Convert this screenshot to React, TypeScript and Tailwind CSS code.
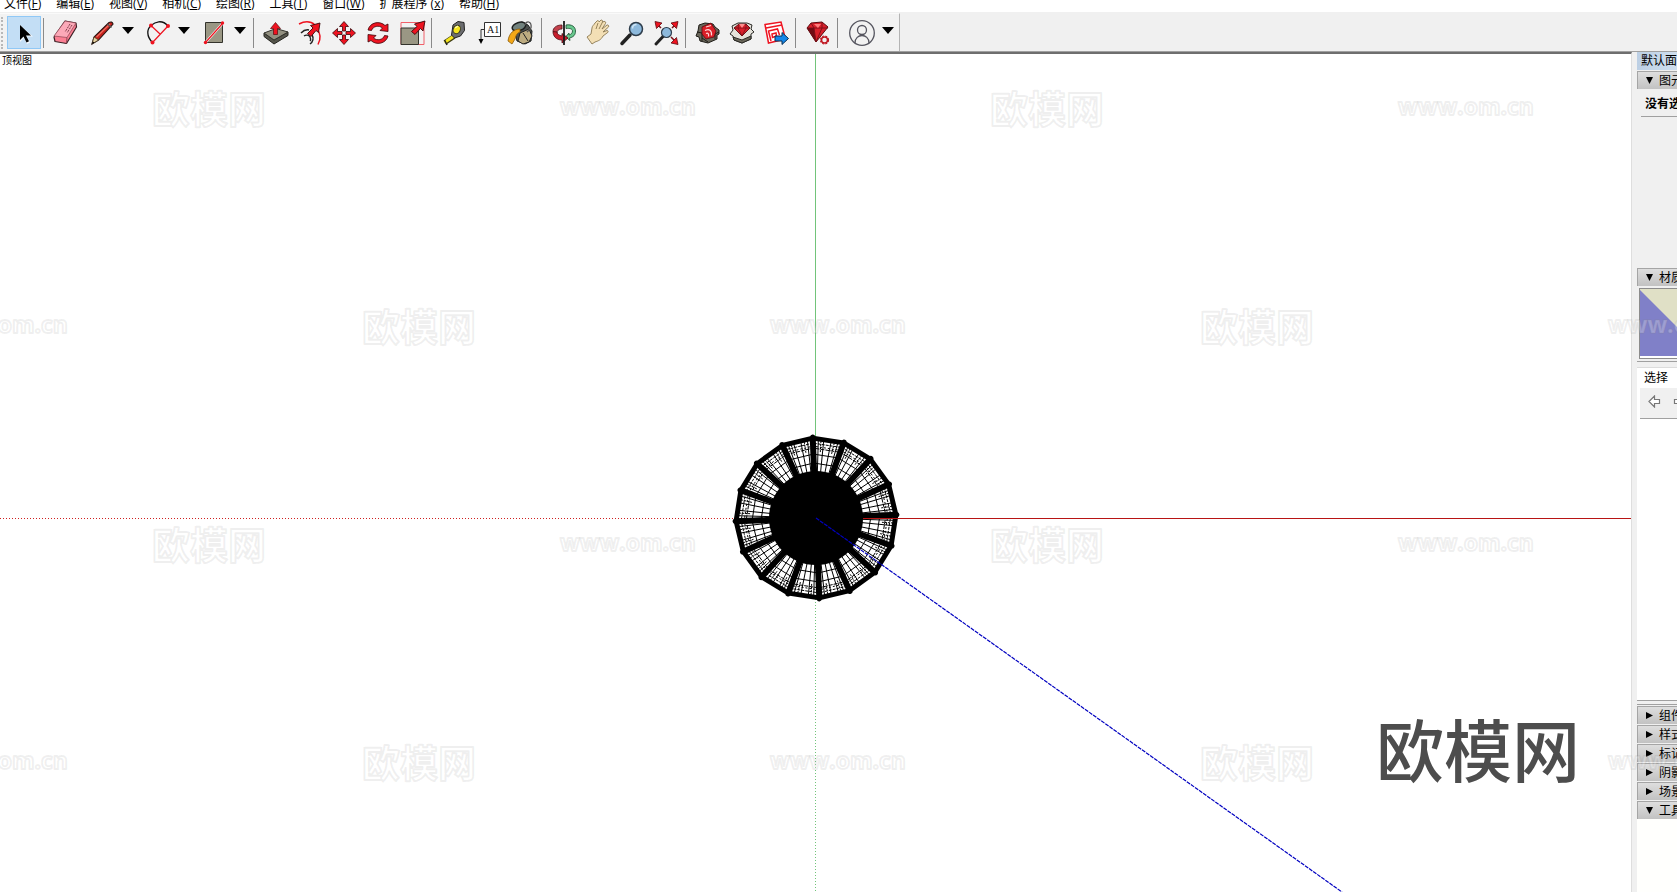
import React from 'react';
import clsx from 'clsx';

const RED = '#ee1320';

function Icon({ children }: { children: React.ReactNode }) {
  return (
    <svg viewBox="0 0 26 26" className="w-[26px] h-[26px] overflow-visible" fill="none" aria-hidden="true">
      {children}
    </svg>
  );
}

const SelectIcon = () => (
  <Icon>
    <path d="M9 5v17l4-4 3 6 3-1.500-3-6h6z" fill="#fff" opacity=".8" />
    <path d="M9 5v15l3.500-3.500 3 6 2.500-1.300-3-5.700h5z" fill="#000" />
  </Icon>
);

const EraserIcon = () => (
  <Icon>
    <path d="M12 1l11 2 .5 4-10 16.500L2 21.500 1 17z" fill="#fb7f93" stroke="#3a2226" strokeWidth="1.200" strokeLinejoin="round" />
    <path d="M12 1l11 2-9 14.500L1 16z" fill="#fca9b8" stroke="#8c4452" strokeWidth=".7" />
    <path d="M14 17.500l-.5 6" stroke="#8c4452" />
    <path d="M17 4l-5 8M19 5l-5 8" stroke="#7d3b49" strokeDasharray="2 1" />
  </Icon>
);

const PencilIcon = () => (
  <Icon>
    <path d="M5 24l2-7L22 2.500q3-1.500 4 1.500L11.500 20z" fill="#c5201c" stroke="#2b1512" strokeWidth="1.100" />
    <path d="M9.500 17L23 4" stroke="#f06a5c" strokeWidth="1.300" />
    <path d="M5 24l2-7 4.500 3z" fill="#e6d3a3" stroke="#4a3a22" strokeWidth=".8" />
    <path d="M5 24l.8-2.500 1.700 1z" fill="#000" />
    <path d="M20.500 4l4 3.500" stroke="#555" strokeWidth="1.500" />
  </Icon>
);

const ArcIcon = () => (
  <Icon>
    <path d="M9.500 22.500C3 16 4 9 8 5.500S19-1 25 6" stroke="#111" strokeWidth="1.300" />
    <path d="M8 5.500l9 8.500M25 6L9.500 22.500" stroke={RED} strokeWidth="1.200" />
    <circle cx="8" cy="5.500" r="2" fill={RED} />
    <circle cx="25" cy="6" r="2" fill={RED} />
    <circle cx="9.500" cy="22.500" r="2" fill={RED} />
  </Icon>
);

const RectIcon = () => (
  <Icon>
    <path d="M6.500 2.500h17v20h-17z" fill="#9a9784" stroke="#33332c" />
    <path d="M6.500 22.500l17-19" stroke="#fff" strokeWidth="2.500" />
    <path d="M6.500 22.500l17-19" stroke={RED} strokeWidth="1.200" />
    <circle cx="6.500" cy="22.500" r="1.700" fill={RED} />
    <circle cx="23.500" cy="3" r="1.700" fill={RED} />
  </Icon>
);

const PushPullIcon = () => (
  <Icon>
    <path d="M1 13v3.500l10 7.500 14-8.500V12l-14 8z" fill="#55554b" stroke="#24241f" strokeLinejoin="round" />
    <path d="M1 13l12-4.500L25 12l-14 8z" fill="#929080" stroke="#33332c" strokeLinejoin="round" />
    <path d="M12.500 2.500l5 6h-3v6h-4v-6h-3z" fill={RED} stroke="#5a0a0f" strokeWidth=".7" />
  </Icon>
);

const OffsetIcon = () => (
  <Icon>
    <path d="M2 4C8 1 14 1.500 18 5M20 9c4 5 4 10 1 15.500" stroke={RED} strokeWidth="1.500" />
    <path d="M4 13c3-3 6-3.500 8-3M15 15c2 3 1 7-2 9" stroke="#222" strokeWidth="1.500" />
    <path d="M7 16c2-1.500 5-1 6 1s1 3 0 4" stroke="#222" strokeWidth="1.300" />
    <path d="M10.500 13.500l5.500-5.500-2.500-2.500L23 3l-1.500 9.500-2.500-2-5 6z" fill={RED} stroke="#3b080b" strokeWidth=".9" />
  </Icon>
);

const MoveIcon = () => (
  <Icon>
    {[0, 90, 180, 270].map(a => (
      <path key={a} transform={`rotate(${a} 13 13)`} d="M13 1.500l4.500 5h-3V11h-3V6.500h-3z" fill={RED} stroke="#3b080b" strokeWidth=".8" />
    ))}
  </Icon>
);

const RotateIcon = () => (
  <Icon>
    {[0, 180].map(a => (
      <path key={a} transform={`rotate(${a} 13 13)`} d="M3 10C5 2 15 .5 20 5.500l3-1.500v7.500l-8-1 2.500-2.500C14 5 8 6 6.500 10.500z" fill={RED} stroke="#3b080b" strokeWidth=".8" />
    ))}
  </Icon>
);

const ScaleIcon = () => (
  <Icon>
    <path d="M2 2.500h23v22H2z" stroke="#f0606a" />
    <path d="M2 8h17.500v16.500H2z" fill="#9a9784" stroke="#33332c" />
    <path d="M12.500 11.500l5.500-5-2.500-2.500L26 1l-2 10-2.500-2.500-5.500 6z" fill={RED} stroke="#3b080b" strokeWidth=".9" />
  </Icon>
);

const TapeIcon = () => (
  <Icon>
    <path d="M4 22.500l9-6" stroke="#3d3a10" strokeWidth="5" />
    <path d="M3.500 22.500l9.500-6.500" stroke="#f4e51c" strokeWidth="3" />
    <path d="M3.500 20l2.500 5" stroke="#222" strokeWidth="1.500" />
    <path d="M12 5l5-3.500 6 1 .5 8-4 5.500-6 2-3-3z" fill="#6c6d70" stroke="#222" />
    <ellipse cx="16" cy="9.500" rx="3.500" ry="4.300" transform="rotate(25 16 9)" fill="#f4e51c" stroke="#3c3c22" />
    <path d="M14 8l3-2" stroke="#fffbb0" strokeWidth="1.500" />
  </Icon>
);

const TextIcon = () => (
  <Icon>
    <path d="M9.500 2.500h16v14h-16z" fill="#fff" stroke="#333" />
    <path d="M9 9.500H6V20" stroke="#333" />
    <path d="M3.500 19h5L6 24z" fill="#000" />
    <text x="12" y="13" fontSize="10" fill="#111" fontFamily="Liberation Serif, serif">A1</text>
  </Icon>
);

const PaintIcon = () => (
  <Icon>
    <path d="M4 6l9-4 6 3 4 6-1 10-6 3-8-3z" fill="#4b4f4d" stroke="#1d1f1e" strokeLinejoin="round" />
    <path d="M11 13l9-4 3 7-3 6-6 2-5-3z" fill="#bcab80" stroke="#222" strokeLinejoin="round" />
    <path d="M14 13l5 8" stroke="#222" />
    <ellipse cx="10" cy="6.500" rx="7" ry="4" transform="rotate(-18 10 6.500)" fill="#71827e" stroke="#1d1f1e" strokeWidth="1.500" />
    <path d="M16 5c1-5 7-4 6 3l-4 4" stroke="#555" strokeWidth="1.300" />
    <path d="M11 9C5 9 0 13 -1 21l4 3 3-5c1-4 2-6 5-7z" fill="#f4a817" stroke="#8a5c0d" strokeWidth=".8" />
  </Icon>
);

const OrbitIcon = () => (
  <Icon>
    <path d="M15 5c6-1 9.500 2 9.500 6 0 4-2 6-6 7l.5 2.500-4.500-3.500 3.500-4v2c2-.5 3.500-2 3.500-4S19 8 15 8.500z" fill="#69c88e" stroke="#174b2d" strokeWidth=".8" />
    <path d="M11 5C5 5 2 8 2 11.500L6 14c-.5-3 1.500-5 5-5z" fill="#c4404b" stroke="#4b0b12" strokeWidth=".8" />
    <path d="M2 11.500C2 16 5 20 11 20v3l6-5-6-4.500V16c-3-.5-5-2-5-4z" fill="#c81e2d" stroke="#4b0b12" strokeWidth=".8" />
    <path d="M13 1v24" stroke="#1a1a1a" strokeWidth="1.800" />
  </Icon>
);

const HandIcon = () => (
  <Icon>
    <path
      d="M2 17l4-3 1-6c0-2 2-3 3-5l2-2c1-1 2 0 2 1l2-2c1 0 2 .5 1.500 2L19 1.500c1.500-.5 2 1 1.500 2L17 9l5-4c1.500-.5 2 1 1.500 2L18 12l4-1.500c1.500 0 1.500 2 0 2.500l-4 3c-2 4-5 5-8 6l-3 2z"
      fill="#f3dfb5"
      stroke="#8b7850"
      strokeWidth=".9"
      strokeLinejoin="round"
    />
    <path d="M13 3l-2 6M17.500 2L14 9" stroke="#8b7850" strokeWidth=".9" />
  </Icon>
);

const ZoomIcon = () => (
  <Icon>
    <path d="M3 23.500l8-8.500" stroke="#222" strokeWidth="3.500" strokeLinecap="round" />
    <circle cx="17" cy="9" r="6.500" fill="#8db9dc" stroke="#2e3d4b" strokeWidth="1.500" />
    <path d="M13.500 8.500c0-3 2-4 4-4" stroke="#cfe5f5" strokeWidth="1.500" />
  </Icon>
);

const ZoomExtentsIcon = () => (
  <Icon>
    <path d="M3 3l5 5M24 3l-5 5M24 23l-6-6" stroke="#7a1118" strokeWidth="1.500" />
    <path d="M2 1.500l7 1.500-5.500 5.500zM25 1.500L18 3l5.500 5.500zM25 24.500L18 23l5.500-5.500z" fill={RED} stroke="#5a0a0f" strokeWidth=".8" />
    <path d="M3 24l7-7.500" stroke="#222" strokeWidth="3" strokeLinecap="round" />
    <circle cx="13.500" cy="12.500" r="5" fill="#8db9dc" stroke="#2e3d4b" strokeWidth="1.200" />
  </Icon>
);

const WarehouseIcon = () => (
  <Icon>
    <path d="M4 5l6-2 8 1 2 3 4 3v4l-2 1v4l-9 4-8-2-1-4-3-1 2-5z" fill="#6a675b" stroke="#1e1c17" strokeLinejoin="round" />
    <path d="M2 12l5 1v8M24 12l-4 2v5M7 18l6 4" stroke="#1e1c17" />
    <path d="M7 7l9-4 5 8-2 6-8 2-4-5z" fill="#da1f28" stroke="#5a0a0f" strokeWidth=".8" />
    <path d="M11 7l5-1.500M10 10.500c4-2 7-.5 6.500 5M11 13.500c2-1 3 .5 2.500 3" stroke="#ffd9d9" strokeWidth="1.200" />
  </Icon>
);

const ExtensionWarehouseIcon = () => (
  <Icon>
    <path d="M3 6l6-3h9l5 2-1 4 3 3-3 2v5l-9 4-8-3-1-4-3-2 3-4z" fill="#e4e2da" stroke="#2b2a26" strokeLinejoin="round" />
    <path d="M4 17l9 3 9-4v3l-9 4-8-3z" fill="#6b685b" stroke="#2b2a26" />
    <path d="M5 8l5-4h7l4 4-8 8z" fill="#d8202b" stroke="#5a0a0f" strokeWidth=".9" />
    <path d="M5 8h16M10 4l-1 4 4 8 4-8V4" stroke="#7a0e16" strokeWidth=".8" />
    <path d="M10 4l3 4 3-4z" fill="#ff8d8d" />
  </Icon>
);

const LayoutIcon = () => (
  <Icon>
    <path d="M2 4.500L18 2l4.500 17-17 4z" fill="#fff" stroke={RED} strokeWidth="1.500" />
    <path d="M3 8l16-3M8 21L5.500 11l9-2 2 6M9 14l4-1 .5 3-4 1.500z" stroke={RED} strokeWidth="1.500" />
    <path d="M12 16h7v-3.500l6.500 6-6.500 6V21h-7z" fill="#1587e8" stroke="#0b2f52" />
  </Icon>
);

const RubyIcon = () => (
  <Icon>
    <path d="M6 3l11-1 6 5-12 15L2 8z" fill="#d8202b" stroke="#5a0a0f" />
    <path d="M2 8h7l2 14z" fill="#6f0c14" />
    <path d="M6 3l3 5 2 14 6-14V2M2 8h21" stroke="#7a0e16" strokeWidth=".9" />
    <path d="M9 4l4 4 3-4z" fill="#ff7d7d" />
    <circle cx="19.500" cy="20" r="3" fill="#f0f0f0" stroke="#c01822" strokeWidth="1.500" />
    <circle cx="19.500" cy="20" r="4" stroke="#c01822" strokeWidth="1.200" strokeDasharray="2 1.200" />
  </Icon>
);

const UserIcon = () => (
  <Icon>
    <circle cx="15" cy="13" r="12.300" stroke="#55555f" strokeWidth="1.300" />
    <circle cx="15" cy="10" r="4.500" stroke="#55555f" strokeWidth="1.300" />
    <path d="M8 23c0-10 14-10 14 0" stroke="#55555f" strokeWidth="1.300" />
  </Icon>
);

type Tool = { label: string; icon: () => React.JSX.Element; menu?: boolean; active?: boolean };

const toolGroups: Tool[][] = [
  [{ label: '选择', icon: SelectIcon, active: true }],
  [
    { label: '擦除', icon: EraserIcon },
    { label: '直线', icon: PencilIcon, menu: true },
    { label: '圆弧', icon: ArcIcon, menu: true },
    { label: '矩形', icon: RectIcon, menu: true },
  ],
  [
    { label: '推/拉', icon: PushPullIcon },
    { label: '偏移', icon: OffsetIcon },
    { label: '移动', icon: MoveIcon },
    { label: '旋转', icon: RotateIcon },
    { label: '缩放', icon: ScaleIcon },
  ],
  [
    { label: '卷尺工具', icon: TapeIcon },
    { label: '文字', icon: TextIcon },
    { label: '材质', icon: PaintIcon },
  ],
  [
    { label: '环绕观察', icon: OrbitIcon },
    { label: '平移', icon: HandIcon },
    { label: '实时缩放', icon: ZoomIcon },
    { label: '缩放范围', icon: ZoomExtentsIcon },
  ],
  [
    { label: '3D Warehouse', icon: WarehouseIcon },
    { label: 'Extension Warehouse', icon: ExtensionWarehouseIcon },
    { label: 'LayOut', icon: LayoutIcon },
  ],
  [{ label: '扩展程序管理器', icon: RubyIcon }],
  [{ label: '用户', icon: UserIcon, menu: true }],
];

const menus = [
  ['文件', 'F'],
  ['编辑', 'E'],
  ['视图', 'V'],
  ['相机', 'C'],
  ['绘图', 'R'],
  ['工具', 'T'],
  ['窗口', 'W'],
  ['扩展程序 ', 'x'],
  ['帮助', 'H'],
];

function MenuBar() {
  return (
    <nav className="h-3 bg-white overflow-hidden flex items-end gap-[15px] pl-1">
      {menus.map(([name, key]) => (
        <button key={key} className="text-[12px] leading-[16px] whitespace-pre">
          {name}(<span className="underline">{key}</span>)
        </button>
      ))}
    </nav>
  );
}

function Toolbar() {
  return (
    <div className="h-10 bg-[#f0f0f0] flex border-b border-[#a0a0a0]">
      <div className="flex items-center border-t border-r border-t-[#fafafa] border-r-[#b4b4b4] mt-px bg-[#f2f2f2]">
        <div className="w-[3px] h-8 ml-px mr-[3px] border-l-2 border-dotted border-[#b8b8b8]" />
        {toolGroups.map((group, i) => (
          <React.Fragment key={i}>
            {i > 0 && (
              <div className="w-2 pl-0.5">
                <div className="w-px h-[30px] bg-[#8a8a8a]" />
              </div>
            )}
            {group.map(({ label, icon: ToolIcon, menu, active }) => (
              <React.Fragment key={label}>
                <button
                  aria-label={label}
                  className={clsx(
                    'w-[34px] h-[33px] flex items-center justify-center border',
                    active ? 'bg-[#c3def5] border-[#90c8f6]' : 'border-transparent'
                  )}
                >
                  <ToolIcon />
                </button>
                {menu && (
                  <button aria-label={`${label}菜单`} className="w-[22px] h-[33px] pl-[5px]">
                    <svg viewBox="0 0 12 7" className="w-3 h-[7px] -mt-1" aria-hidden="true">
                      <path d="M0 0h12L6 7z" fill="#000" />
                    </svg>
                  </button>
                )}
              </React.Fragment>
            ))}
          </React.Fragment>
        ))}
      </div>
    </div>
  );
}

const SIDES = 16;
const CX = 816;
const CY = 464;

const polar = (r: number, deg: number) => {
  const a = (deg * Math.PI) / 180;
  return `${(CX + r * Math.cos(a)).toFixed(1)} ${(CY + r * Math.sin(a)).toFixed(1)}`;
};

// polygonal ring at the given radius, one vertex per rib
const ring = (r: number) =>
  'M' + Array.from({ length: SIDES }, (_, i) => polar(r, (i * 360) / SIDES - 2.3)).join('L') + 'Z';

const spokes = (r1: number, r2: number, offset: number) =>
  Array.from({ length: SIDES }, (_, i) => {
    const a = (i * 360) / SIDES - 2.3 + offset;
    return `M${polar(r1, a)}L${polar(r2, a)}`;
  }).join('');

function Wireframe() {
  return (
    <g fill="none" stroke="#000">
      <path d={ring(80)} fill="#fff" fillOpacity=".9" strokeWidth="5" strokeLinejoin="round" />
      <path d={ring(75)} strokeWidth="1" strokeDasharray="3 1" />
      <path d={ring(72)} strokeWidth="1" strokeDasharray="2 2" />
      <path d={ring(70)} strokeWidth="1" strokeDasharray="4 1" />
      <path d={ring(64)} strokeWidth="1" />
      <path d={ring(55)} strokeWidth="1" />
      <path d={spokes(44, 81, 0)} strokeWidth="6" />
      <path d={spokes(44, 78, 4)} strokeWidth="1" />
      <path d={spokes(44, 78, -4)} strokeWidth="1" />
      <path d={spokes(44, 78, 8)} strokeWidth="1" />
      <path d={spokes(44, 78, 13.5)} strokeWidth="1" />
      <path d={spokes(66, 78, 6)} strokeWidth="1" strokeDasharray="2 1" />
      <path d={spokes(66, 78, 16)} strokeWidth="1" strokeDasharray="2 1" />
      <path d={spokes(80, 81, 0)} strokeWidth="5" strokeLinecap="round" />
      <circle cx={CX} cy={CY} r="47" fill="#000" stroke="none" />
    </g>
  );
}

function Viewport() {
  return (
    <main className="flex-1 min-w-0 bg-white border-t-2 border-t-[#6e6e6e] border-r border-r-[#dedede] relative overflow-hidden">
      <p className="absolute left-0.5 top-0 text-[10px] leading-[12px] text-black">顶视图</p>
      <svg viewBox="0 0 1631 838" preserveAspectRatio="xMinYMid slice" className="w-full h-full" aria-hidden="true">
        <path d={`M${CX - 0.5} 0V${CY}`} stroke="#72c47a" />
        <path d={`M${CX - 0.5} ${CY}V838`} stroke="#72c47a" strokeDasharray="1 2" />
        <path d={`M0 ${CY + 0.5}H${CX}`} stroke="#d02020" strokeDasharray="1 2" />
        <Wireframe />
        <path d={`M${CX + 47} ${CY + 0.5}H1631`} stroke="#b81414" />
        <path d={`M${CX} ${CY}L1342 838`} stroke="#0000c0" strokeWidth="1.200" strokeDasharray="4 1" />
      </svg>
    </main>
  );
}

function PanelHeader({ title, open }: { title: string; open?: boolean }) {
  return (
    <button className="w-full h-[18px] shrink-0 flex items-center pl-2 gap-1.5 text-[12px] leading-[16px] whitespace-nowrap overflow-hidden bg-linear-to-b from-[#dedede] to-[#c2c2c2] border-t border-l border-[#a5a5a5]">
      <svg viewBox="0 0 7 7" className="w-[7px] h-[7px] shrink-0" aria-hidden="true">
        <path d={open ? 'M0 0h7L3.500 7z' : 'M0 0v7l7-3.500z'} fill="#000" />
      </svg>
      {title}
    </button>
  );
}

function BackArrow({ flip }: { flip?: boolean }) {
  return (
    <svg viewBox="0 0 13 13" className={clsx('w-[13px] h-[13px] shrink-0', flip && '-scale-x-100')} aria-hidden="true">
      <path d="M1 6.500L6.500 1v3.500h5v4h-5V12z" fill="#fff" stroke="#777" strokeWidth="1.200" />
    </svg>
  );
}

function Tray() {
  return (
    <aside className="w-10 shrink-0 ml-[5px] flex flex-col overflow-hidden whitespace-nowrap">
      <h2 className="h-[18px] shrink-0 pl-1 text-[12px] leading-[18px] bg-linear-to-r from-[#bccfe4] to-[#cfdfef]">默认面板</h2>
      <div className="h-px shrink-0" />
      <PanelHeader title="图元信息" open />
      <div className="h-[179px] shrink-0 pl-1">
        <p className="h-7 pl-1 pt-1.5 text-[12px] leading-[18px] font-bold border-b border-[#a0a0a0]">没有选择内容</p>
      </div>

      <PanelHeader title="材质" open />
      <div className="h-[76px] shrink-0 pl-0.5 pt-0.5 border-b border-[#a0a0a0]">
        <div className="h-[71px] border border-r-0 border-[#8c8c8c] bg-white pb-0.5">
          <svg viewBox="0 0 64 66" preserveAspectRatio="xMinYMin slice" className="w-full h-full" aria-hidden="true">
            <path d="M0 0h64v66H0z" fill="#e0e0c6" />
            <path d="M0 1l64 64v1H0z" fill="#8080c8" />
          </svg>
        </div>
      </div>
      <div className="mt-[5px] flex-1 flex flex-col bg-white border-t border-[#dcdcdc]">
        <button className="h-5 shrink-0 pl-[7px] text-left text-[12px] leading-[16px]">选择</button>
        <div className="h-[31px] shrink-0 ml-[3px] pl-2 pb-1 flex items-center gap-3 bg-[#f0f0f0] border-b border-[#a0a0a0]">
          <button aria-label="后退"><BackArrow /></button>
          <button aria-label="前进"><BackArrow flip /></button>
        </div>
      </div>
      <div className="h-[5px] mb-px shrink-0 border-y border-[#a0a0a0]" />

      <div className="flex flex-col gap-px shrink-0">
        <PanelHeader title="组件" />
        <PanelHeader title="样式" />
        <PanelHeader title="标记" />
        <PanelHeader title="阴影" />
        <PanelHeader title="场景" />
        <PanelHeader title="工具向导" open />
      </div>
      <div className="h-[73px] shrink-0 bg-[#fffffd]" />
    </aside>
  );
}

const STEP = 838;
const markRows = [
  { y: 110, logo: 209, site: 628 },
  { y: 328, logo: 419, site: 0 },
  { y: 546, logo: 209, site: 628 },
  { y: 764, logo: 419, site: 0 },
];

function Watermarks() {
  return (
    <svg
      viewBox="0 0 1677 892"
      preserveAspectRatio="xMidYMid slice"
      className="absolute inset-0 w-full h-full pointer-events-none"
      textAnchor="middle"
      fontWeight="700"
      aria-hidden="true"
    >
      <g fill="#fff" fillOpacity=".25" stroke="#808080" strokeOpacity=".12" strokeWidth="2" strokeLinejoin="round">
        {markRows.map(({ y, logo, site }) => (
          <React.Fragment key={y}>
            {[0, 1].map(i => (
              <text key={i} x={logo + i * STEP} y={y + 13} fontSize="38" fontFamily="Noto Sans CJK SC, sans-serif">欧模网</text>
            ))}
            {[0, 1, 2].map(i => (
              <text key={i} x={site + i * STEP} y={y + 5} fontSize="23" fontFamily="Open Sans, sans-serif">www.om.cn</text>
            ))}
          </React.Fragment>
        ))}
      </g>
      <text x="1478" y="777" fontSize="68" fontWeight="500" fill="#4d4d4d" fontFamily="Noto Sans CJK SC, sans-serif">欧模网</text>
    </svg>
  );
}

export default function App() {
  return (
    <div className="relative min-h-screen flex flex-col overflow-hidden bg-[#f0f0f0] text-black font-['Open_Sans','Noto_Sans_CJK_SC',sans-serif]">
      <MenuBar />
      <Toolbar />
      <div className="flex-1 flex items-stretch">
        <Viewport />
        <Tray />
      </div>
      <Watermarks />
    </div>
  );
}
